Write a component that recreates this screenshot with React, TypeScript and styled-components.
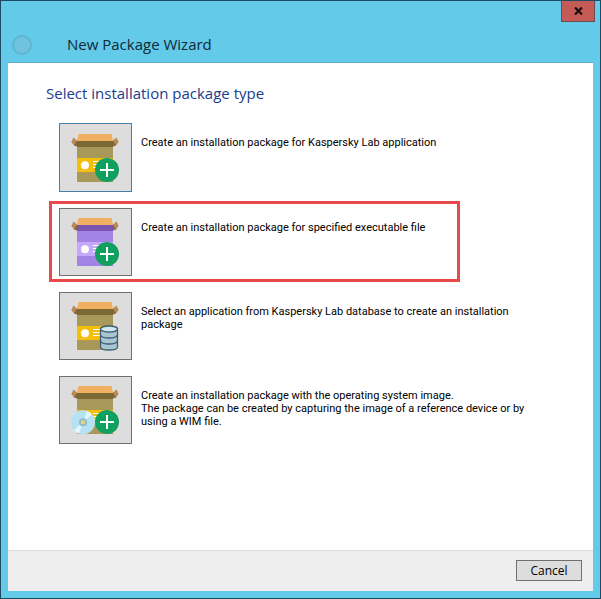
import React from "react";
import styled, { createGlobalStyle, css } from "styled-components";

const GlobalStyle = createGlobalStyle`
  * { box-sizing: border-box; }
  html, body, #root { height: 100%; }
  body { margin: 0; }
  button { font: inherit; color: inherit; }
`;

const Window = styled.div`
  min-height: 100%;
  display: flex;
  flex-direction: column;
  padding: 0 7px 7px;
  border: 1px solid #1c4a60;
  background: #64caea;
  color: #000;
  font-family: Roboto, "Liberation Sans", sans-serif;
  font-size: 11px;
  line-height: 13px;
`;

const TitleBar = styled.header`
  height: 62px;
  flex: none;
  display: flex;
  align-items: flex-start;
  border-bottom: 1px solid #64a9c3;
`;

const BackButton = styled.button`
  width: 20px;
  height: 20px;
  margin: 34px 0 0 4px;
  padding: 0;
  border: 2px solid #5fb5cf;
  border-radius: 50%;
  background: #70c3dd;
`;

const Title = styled.div`
  flex: 1;
  margin: 33px 0 0 35px;
  font-family: "Open Sans", sans-serif;
  font-size: 15px;
  line-height: 20px;
  color: #0c2b38;
`;

const CloseButton = styled.button`
  width: 34px;
  height: 21px;
  margin-right: -2px;
  padding: 0;
  display: flex;
  align-items: center;
  justify-content: center;
  border: 1px solid #6d4a52;
  border-top: 0;
  background: #c45b57;
`;

const Page = styled.main`
  flex: 1;
  display: flex;
  flex-direction: column;
  background: #fff;
`;

const Heading = styled.h1`
  margin: 19px 38px 0;
  font-family: "Open Sans", sans-serif;
  font-size: 15px;
  font-weight: 400;
  line-height: 22px;
  color: #1a3c8c;
`;

const OptionList = styled.ul`
  flex: 1;
  display: flex;
  flex-direction: column;
  align-items: flex-start;
  gap: 16px;
  margin: 0;
  padding: 19px 51px;
  list-style: none;
`;

const Option = styled.li<{ $marked?: boolean }>`
  position: relative;
  display: flex;
  gap: 9px;

  ${(p) =>
    p.$marked &&
    css`
      &::after {
        content: "";
        position: absolute;
        inset: -7px -35px -6px -10px;
        border: 3px solid #e84a4c;
        pointer-events: none;
      }
    `}
`;

const OptionButton = styled.button<{ $focused?: boolean }>`
  width: 73px;
  height: ${(p) => (p.$focused ? 69 : 68)}px;
  flex: none;
  padding: 0;
  display: flex;
  align-items: center;
  justify-content: center;
  border: 1px solid ${(p) => (p.$focused ? "#4680a8" : "#707070")};
  background: #dddddd;
`;

const OptionText = styled.label`
  max-width: 400px;
  padding-top: 13px;
  white-space: pre-line;
`;

const Footer = styled.footer`
  flex: none;
  display: flex;
  justify-content: flex-end;
  padding: 9px 11px 10px;
  border-top: 1px solid #dcdcdc;
  background: #eeeeee;
`;

const CancelButton = styled.button`
  width: 66px;
  height: 21px;
  padding: 0;
  border: 1px solid #707070;
  background: #dddddd;
  font-family: "Open Sans", sans-serif;
  font-size: 12px;
  line-height: 18px;
`;

type Badge = "plus" | "database" | "disc";

const gold = { body: "#a8985a", shade: "#7b6a35", band: "#f5bd0c", ink: "#ffffff" };
const violet = { body: "#a284e6", shade: "#7a55b0", band: "#c4a8fa", ink: "#ffffff" };

function PackageIcon({ badge, tone = gold }: { badge: Badge; tone?: typeof gold }) {
  return (
    <svg width="50" height="50" viewBox="1 0 50 50" aria-hidden="true">
      <path d="M7 13H43V49H7Z" fill={tone.body} />
      <path d="M7 7.5H43V14H7Z" fill={tone.shade} />
      <path d="M8.5 1H41.5L43 8H7Z" fill="#efb061" />
      <path d="M3.5 4.5L7 7.5V12L4 12.5L1.3 9Z M46.5 4.5L43 7.5V12L46 12.5L48.7 9Z" fill="#b98a58" />
      <path d="M7 7.5V13.5L4 12.5Z M43 7.5V13.5L46 12.5Z" fill="#8b643d" />
      <rect x="7" y="25" width="36" height="14" fill={tone.band} />
      {badge !== "disc" && <circle cx="15" cy="32.2" r="4" fill={tone.ink} />}
      <path d="M23 28.5H37M23 31.5H37M23 34.5H37" stroke={tone.ink} strokeWidth="1.2" />
      {badge === "disc" && (
        <g>
          <circle cx="13" cy="37.3" r="12" fill="#b5e3f3" />
          <path d="M13 37.3L17 26A12 12 0 0 1 22 29.3ZM13 37.3L4 45.3A12 12 0 0 0 9 48.6Z" fill="#e4f7fc" />
          <circle cx="13" cy="37.3" r="4" fill="#88bccb" />
          <circle cx="13" cy="37.3" r="2.3" fill="#e2d481" />
        </g>
      )}
      {badge === "database" ? (
        <g stroke="#3e5f70" strokeWidth="1.3">
          <path d="M30.5 28V46C30.5 50 47.5 50 47.5 46V28Z" fill="#a9c5d2" />
          <path d="M30.5 34C32 38 46 38 47.5 34M30.5 40C32 44 46 44 47.5 40" fill="none" />
          <ellipse cx="39" cy="28" rx="8.5" ry="3" fill="#d5e7ee" />
        </g>
      ) : (
        <g>
          <circle cx="37" cy="37" r="12" fill="#12a060" />
          <path d="M37 30V44M30 37H44" stroke="#fff" strokeWidth="2" />
        </g>
      )}
    </svg>
  );
}

const options: {
  id: string;
  text: string;
  badge: Badge;
  tone?: typeof gold;
  focused?: boolean;
  marked?: boolean;
}[] = [
  { id: "kaspersky", text: "Create an installation package for Kaspersky Lab application", badge: "plus", focused: true },
  { id: "executable", text: "Create an installation package for specified executable file", badge: "plus", tone: violet, marked: true },
  { id: "database", text: "Select an application from Kaspersky Lab database to create an installation package", badge: "database" },
  {
    id: "image",
    text: "Create an installation package with the operating system image.\nThe package can be created by capturing the image of a reference device or by using a WIM file.",
    badge: "disc",
  },
];

export default function App() {
  return (
    <>
      <GlobalStyle />
      <Window>
        <TitleBar>
          <BackButton aria-label="Back" disabled />
          <Title>New Package Wizard</Title>
          <CloseButton aria-label="Close">
            <svg width="9" height="8" viewBox="0 0 9 8" aria-hidden="true">
              <path d="M1 0.5L8 7.5M8 0.5L1 7.5" stroke="#1c0d0d" strokeWidth="2.2" />
            </svg>
          </CloseButton>
        </TitleBar>
        <Page>
          <Heading>Select installation package type</Heading>
          <OptionList>
            {options.map((o) => (
              <Option key={o.id} $marked={o.marked}>
                <OptionButton id={o.id} $focused={o.focused}>
                  <PackageIcon badge={o.badge} tone={o.tone} />
                </OptionButton>
                <OptionText htmlFor={o.id}>{o.text}</OptionText>
              </Option>
            ))}
          </OptionList>
          <Footer>
            <CancelButton>Cancel</CancelButton>
          </Footer>
        </Page>
      </Window>
    </>
  );
}
